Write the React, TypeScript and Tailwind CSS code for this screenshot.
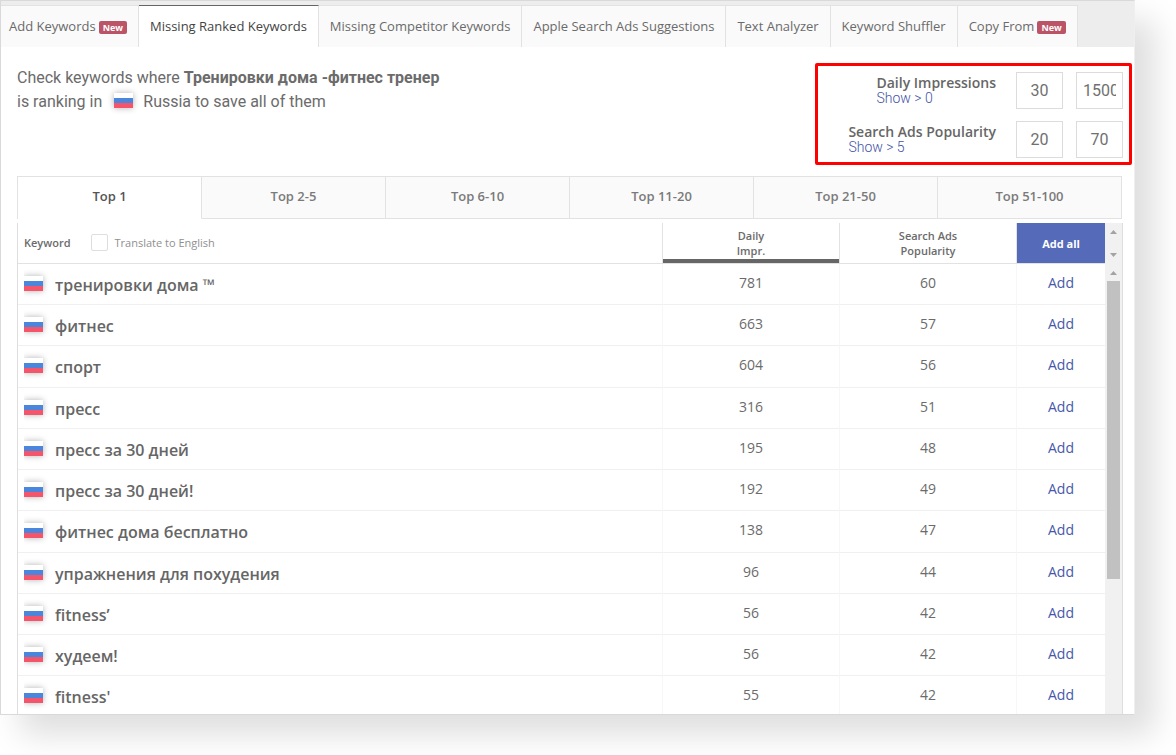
import React, { useState } from 'react';
import clsx from 'clsx';

const PAGE_TABS = [
  { label: 'Add Keywords', isNew: true },
  { label: 'Missing Ranked Keywords' },
  { label: 'Missing Competitor Keywords' },
  { label: 'Apple Search Ads Suggestions' },
  { label: 'Text Analyzer' },
  { label: 'Keyword Shuffler' },
  { label: 'Copy From', isNew: true },
];

const RANK_TABS = ['Top 1', 'Top 2-5', 'Top 6-10', 'Top 11-20', 'Top 21-50', 'Top 51-100'];

const KEYWORDS = [
  { keyword: 'тренировки дома ™', impressions: 781, popularity: 60 },
  { keyword: 'фитнес', impressions: 663, popularity: 57 },
  { keyword: 'спорт', impressions: 604, popularity: 56 },
  { keyword: 'пресс', impressions: 316, popularity: 51 },
  { keyword: 'пресс за 30 дней', impressions: 195, popularity: 48 },
  { keyword: 'пресс за 30 дней!', impressions: 192, popularity: 49 },
  { keyword: 'фитнес дома бесплатно', impressions: 138, popularity: 47 },
  { keyword: 'упражнения для похудения', impressions: 96, popularity: 44 },
  { keyword: 'fitness’', impressions: 56, popularity: 42 },
  { keyword: 'худеем!', impressions: 56, popularity: 42 },
  { keyword: "fitness'", impressions: 55, popularity: 42 },
];

function RussianFlag() {
  return (
    <span className="flex h-[15px] w-[19px] flex-col shadow-[0_0_6px_rgba(0,0,0,0.3)]">
      <span className="h-[5px] bg-white" />
      <span className="h-[5px] bg-[#4a86dc]" />
      <span className="h-[5px] bg-[#f4556a]" />
    </span>
  );
}

function Arrow({ down = false }: { down?: boolean }) {
  return (
    <svg viewBox="0 0 7 4" className={clsx('h-1 w-[7px] fill-[#a3a3a3]', down && 'rotate-180')} aria-hidden="true">
      <path d="M0 4 3.5 0 7 4z" />
    </svg>
  );
}

function PageTabs() {
  const [active, setActive] = useState('Missing Ranked Keywords');

  return (
    <nav className="flex bg-[#ededed] pt-1">
      {PAGE_TABS.map(({ label, isNew }) => (
        <button
          key={label}
          type="button"
          onClick={() => setActive(label)}
          className={clsx(
            'flex h-[42px] items-center gap-[3px] border-t border-r border-[#e2e2e2] px-[11px] text-[13px] font-medium whitespace-nowrap first:pl-2',
            label === active ? 'border-t-[#666] bg-white text-[#444]' : 'bg-[#fafafa] text-[#6a6a6a]',
          )}
        >
          {label}
          {isNew && (
            <span className="mt-0.5 h-[13px] rounded-xs bg-[#bc5467] px-1 text-[9px] leading-[14px] font-bold text-white">
              New
            </span>
          )}
        </button>
      ))}
    </nav>
  );
}

interface RangeFilterProps {
  id: string;
  label: string;
  hint: string;
  min: string;
  max: string;
}

function RangeFilter({ id, label, hint, min, max }: RangeFilterProps) {
  const inputClass =
    'h-[37px] w-[47px] border border-[#dcdcdc] px-1.5 text-center font-[Roboto,sans-serif] text-base text-[#707070] outline-none';

  return (
    <div className="flex justify-end">
      <div className="mr-5 pt-[3px]">
        <label htmlFor={id} className="block text-sm leading-4 font-semibold text-[#666]">
          {label}
        </label>
        <a href="#" className="block font-[Roboto,sans-serif] text-sm leading-[14px] font-light text-[#4353a8]">
          {hint}
        </a>
      </div>
      <input id={id} defaultValue={min} className={inputClass} />
      <input aria-label={`${label} max`} defaultValue={max} className={clsx(inputClass, 'ml-[13px]')} />
    </div>
  );
}

function RankTabs() {
  const [active, setActive] = useState('Top 1');

  return (
    <div className="mr-3 ml-4 flex border-l border-[#e2e2e2]">
      {RANK_TABS.map((label) => (
        <button
          key={label}
          type="button"
          onClick={() => setActive(label)}
          className={clsx(
            'h-[43px] flex-1 border-y border-r border-[#e2e2e2] pb-0.5 text-[13px] font-semibold',
            label === active ? 'border-b-white bg-white text-[#555]' : 'bg-[#fafafa] text-[#7a7a7a]',
          )}
        >
          {label}
        </button>
      ))}
    </div>
  );
}

function KeywordTable() {
  return (
    <table className="w-full table-fixed border-separate border-spacing-0 text-[#6b6b6b]">
      <colgroup>
        <col />
        <col className="w-[177px]" />
        <col className="w-[177px]" />
        <col className="w-[89px]" />
      </colgroup>
      <thead>
        <tr className="h-[41px] text-[11px] leading-[15px]">
          <th className="border-b border-[#e2e2e2] p-0 pb-0.5 pl-1.5 text-left font-semibold">
            <div className="flex items-center">
              Keyword
              <label className="ml-5 flex items-center gap-[7px] font-normal text-[#8f8f8f]">
                <input
                  type="checkbox"
                  className="size-[17px] appearance-none rounded-xs border border-[#dedede] bg-white"
                />
                Translate to English
              </label>
            </div>
          </th>
          <th className="border-b border-l border-[#e2e2e2] p-0 font-semibold">
            <div className="h-10 border-b-4 border-[#666] pt-[5px]">
              Daily
              <br />
              Impr.
            </div>
          </th>
          <th className="border-b border-l border-[#e2e2e2] p-0 font-semibold">
            Search Ads
            <br />
            Popularity
          </th>
          <th className="border-b border-l border-[#e2e2e2] p-0">
            <button type="button" className="block h-10 w-full bg-[#566aba] font-bold text-white">
              Add all
            </button>
          </th>
        </tr>
      </thead>
      <tbody>
        {KEYWORDS.map(({ keyword, impressions, popularity }) => (
          <tr
            key={keyword}
            className="h-[41px] text-center text-sm leading-[38px] [&:nth-child(4n+3)]:h-[42px] [&>td]:border-b [&>td]:border-b-[#f0f0f0] [&>td]:border-l-[#f7f7f7] [&>td]:p-0 [&>td]:align-top"
          >
            <td>
              <div className="flex h-[39px] items-center pl-1.5">
                <span className="overflow-hidden py-2 pr-2">
                  <RussianFlag />
                </span>
                <span className="ml-1 pt-[3px] text-base leading-6 font-semibold text-[#666]">{keyword}</span>
              </div>
            </td>
            <td className="border-l">{impressions}</td>
            <td className="border-l">{popularity}</td>
            <td className="border-l">
              <button type="button" className="text-[#4858a9]">
                Add
              </button>
            </td>
          </tr>
        ))}
      </tbody>
    </table>
  );
}

function ScrollRail() {
  return (
    <div className="flex w-[17px] shrink-0 flex-col bg-[#f1f1f1]">
      <div className="flex h-[41px] flex-col items-center justify-between py-[7px]">
        <Arrow />
        <Arrow down />
      </div>
      <div className="flex h-[17px] items-center justify-center">
        <Arrow />
      </div>
      <div className="mx-0.5 h-[298px] bg-[#c1c1c1]" />
    </div>
  );
}

export default function App() {
  return (
    <div className="h-screen overflow-hidden bg-white pr-[41px] pb-10 font-['Open_Sans',sans-serif]">
      <div className="flex h-full flex-col overflow-hidden border border-[#d9d9d9] border-r-[#efefef] bg-white shadow-[20px_20px_30px_rgba(0,0,0,0.13)]">
        <PageTabs />

        <div className="flex items-start justify-between pt-4 pr-0.5 pb-[11px] pl-4">
          <div className="pt-[3px] font-[Roboto,sans-serif] text-base leading-6 text-[#6b6b6b]">
            <p>
              Check keywords where <b>Тренировки дома -фитнес тренер</b>
            </p>
            <p className="flex items-center">
              is ranking in
              <span className="mr-2.5 mb-1 ml-3">
                <RussianFlag />
              </span>
              Russia to save all of them
            </p>
          </div>

          <div className="w-[317px] space-y-3 rounded-xs border-3 border-[#f00] px-1.5 pt-1.5 pb-1">
            <RangeFilter id="impressions" label="Daily Impressions" hint="Show > 0" min="30" max="1500" />
            <RangeFilter id="popularity" label="Search Ads Popularity" hint="Show > 5" min="20" max="70" />
          </div>
        </div>

        <RankTabs />

        <div className="mt-1 mr-[11px] ml-4 flex min-h-0 flex-1 overflow-hidden border-x border-[#dedede]">
          <div className="min-w-0 flex-1">
            <KeywordTable />
          </div>
          <ScrollRail />
        </div>
      </div>
    </div>
  );
}
